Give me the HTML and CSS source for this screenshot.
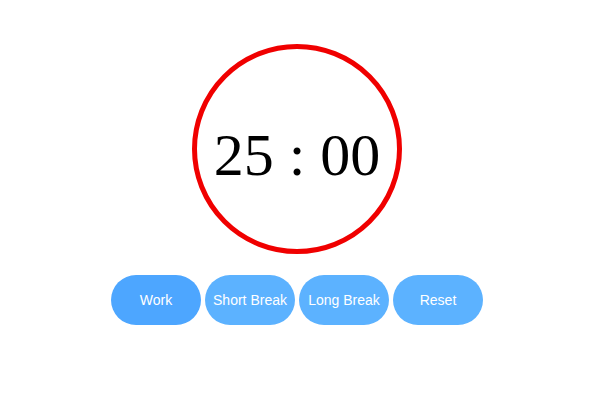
FILE: index.html
```html
<!DOCTYPE html>
<html>
<head>
<meta charset="utf-8">
<link rel="stylesheet" href="styles.css">
</head>
<body>
<main class="app">
  <div class="clock">
    <span class="time">25 : 00</span>
  </div>
  <div class="controls">
    <button class="btn btn-active">Work</button>
    <button class="btn">Short Break</button>
    <button class="btn">Long Break</button>
    <button class="btn">Reset</button>
  </div>
</main>
</body>
</html>
```

FILE: styles.css
```css
html, body {
  margin: 0;
  padding: 0;
  background: #ffffff;
}
.app {
  display: flex;
  flex-direction: column;
  align-items: center;
  padding-top: 44px;
  padding-right: 7px;
}
.clock {
  width: 200px;
  height: 200px;
  border: 5px solid #f00000;
  border-radius: 50%;
  display: flex;
  align-items: center;
  justify-content: center;
}
.time {
  font-family: "Liberation Serif", "Times New Roman", serif;
  font-size: 60px;
  color: #000;
  line-height: 1;
  margin-top: 11px;
}
.controls {
  display: flex;
  gap: 4px;
  margin-top: 21px;
}
.btn {
  width: 90px;
  height: 50px;
  border: none;
  border-radius: 25px;
  background: #5cb2ff;
  color: #ffffff;
  font-family: "Liberation Sans", Arial, sans-serif;
  font-size: 14px;
  padding: 0;
}
.btn-active {
  background: #4da6ff;
}
```
